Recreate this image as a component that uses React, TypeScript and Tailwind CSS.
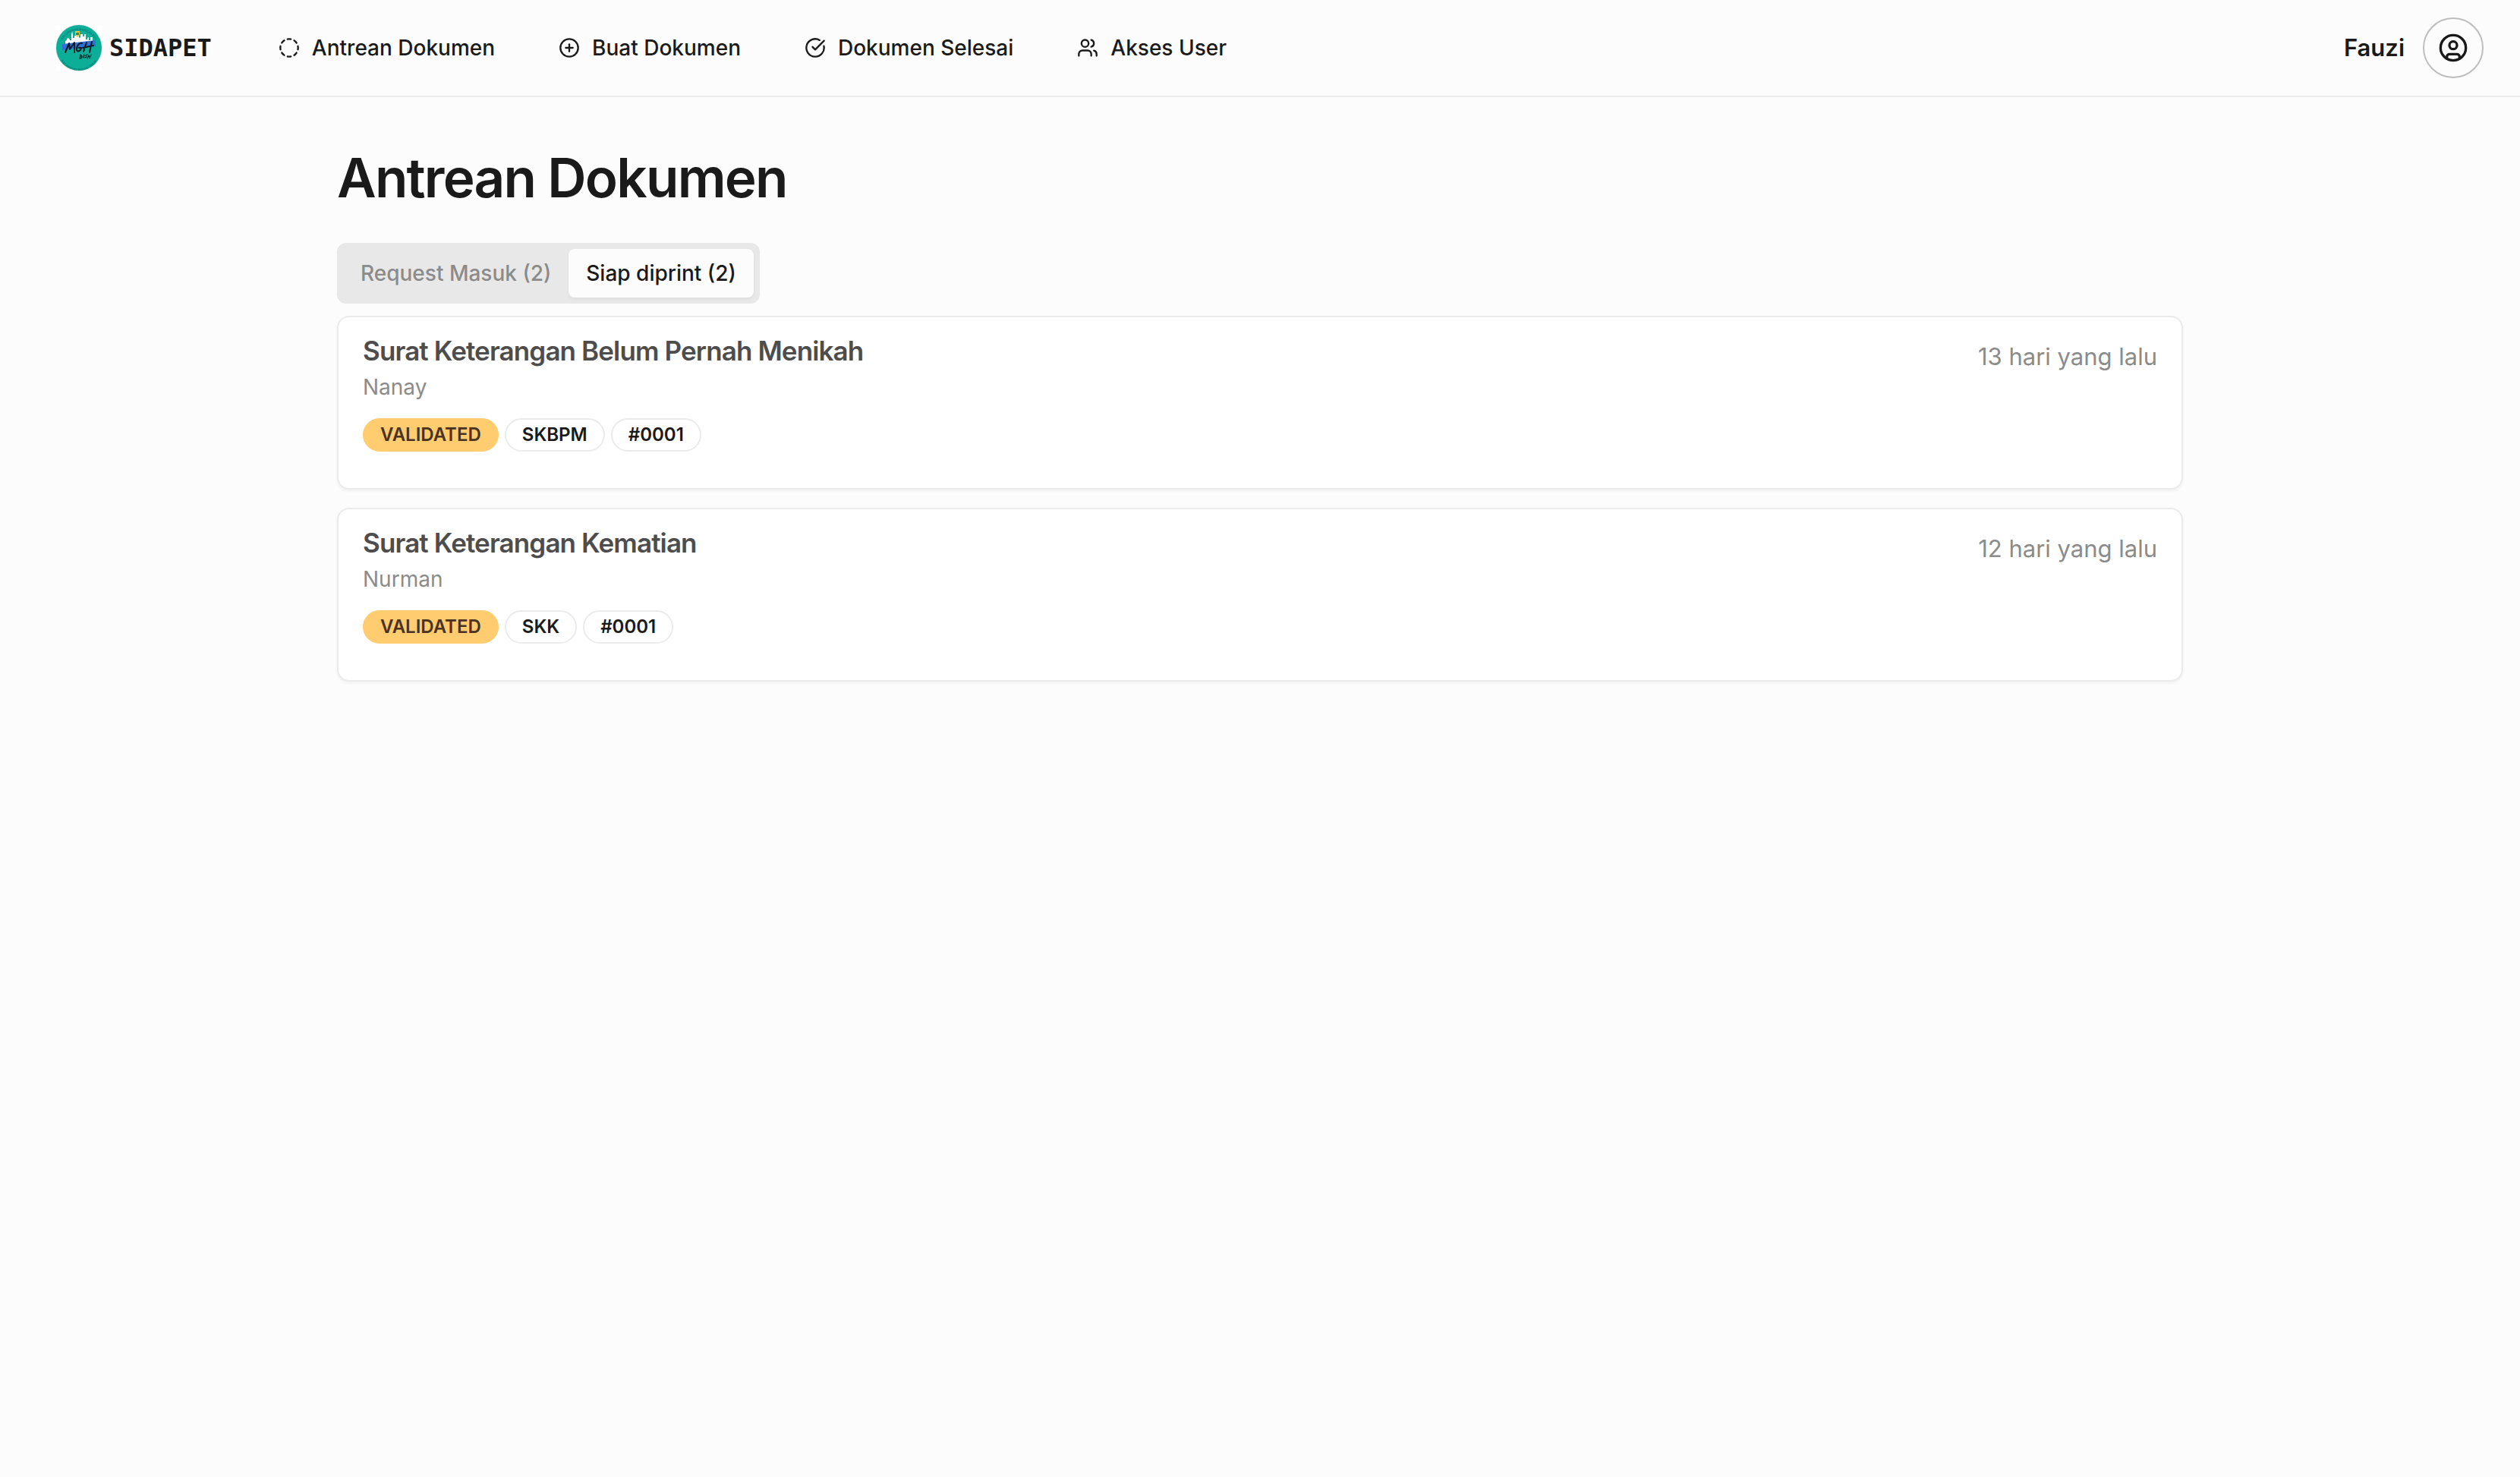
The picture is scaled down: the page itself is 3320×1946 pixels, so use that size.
import React, { useState } from "react";
import { CircleCheckBig, CircleDashed, CirclePlus, CircleUser, Users } from "lucide-react";

const NAV = [
  { label: "Antrean Dokumen", Icon: CircleDashed },
  { label: "Buat Dokumen", Icon: CirclePlus },
  { label: "Dokumen Selesai", Icon: CircleCheckBig },
  { label: "Akses User", Icon: Users },
];

const DOCUMENTS = [
  { title: "Surat Keterangan Belum Pernah Menikah", name: "Nanay", code: "SKBPM", number: "#0001", age: "13 hari yang lalu" },
  { title: "Surat Keterangan Kematian", name: "Nurman", code: "SKK", number: "#0001", age: "12 hari yang lalu" },
];

const TABS = ["Request Masuk (2)", "Siap diprint (2)"];

function Logo() {
  return (
    <svg viewBox="0 0 64 64" className="size-16 shrink-0" role="img" aria-label="MGH Bisa">
      <defs>
        <path id="ring-top" d="M7 34a25 25 0 1 1 50 0" />
        <path id="ring-bottom" d="M4 34a28 28 0 0 0 56 0" />
      </defs>
      <rect x="2" y="2" width="60" height="60" fill="#fff" />
      <circle cx="32" cy="32" r="31" fill="#e9eeed" />
      <circle cx="32" cy="32" r="30" fill="#0cae98" />
      <g fill="#0b7f76" fontFamily="Liberation Sans" fontSize="4" fontWeight="700">
        <text><textPath href="#ring-top" startOffset="50%" textAnchor="middle">KELURAHAN MARGAHAYU</textPath></text>
        <text><textPath href="#ring-bottom" startOffset="50%" textAnchor="middle">KECAMATAN BEKASI TIMUR</textPath></text>
      </g>
      <path fill="#fff" d="M14 27v-4l2-1v-2l2-1 2 2v1h2v-7l1-5 1 5v4h2v-3h6v3l2-1v-4h3v3h2v-3h2v7h2v-2l2-1v4h2v-4h3v10L30 28z" />
      <path fill="#2f6fd6" d="M10 27l44-5v8L10 35z" />
      <path fill="#e7c23c" d="M27 10h6v5l-3 3-3-3z" />
      <path fill="#2f8a4b" d="M28 12h4v3h-4z" />
      <g fill="none" stroke="#111a22" strokeLinecap="round" strokeLinejoin="round">
        <path strokeWidth="2" d="M14 38l5-12 1 8 6-9 0 13M36 26c-4-1-7 4-7 8 0 4 5 3 6-2h-3M42 25l-4 12M49 24l-3 14M37 32l14-3" />
        <path strokeWidth="1.200" d="M34 41l-1 5h2l1-2h-2l2-1-2-2M39 41l-1 4M43 41l-2 1 1 2-2 1M43 46l2-4 1 4M48 41l-1 3" />
      </g>
    </svg>
  );
}

export default function App() {
  const [tab, setTab] = useState(1);
  return (
    <div className="min-h-screen bg-[#fcfcfc] font-[Inter,sans-serif] text-[#1a1a1a]">
      <header className="flex h-32 items-center justify-between border-b-2 border-[#ebebeb] pr-12 pl-18">
        <div className="flex items-center">
          <a href="#" className="flex items-center gap-2">
            <Logo />
            <span className="font-['DejaVu_Sans_Mono',monospace] text-[32px] leading-10 font-bold">SIDAPET</span>
          </a>
          <nav className="ml-22 flex items-center gap-21">
            {NAV.map(({ label, Icon }) => (
              <a key={label} href="#" className="flex items-center gap-4 text-[28px] leading-10 font-medium">
                <Icon className="size-7" />
                {label}
              </a>
            ))}
          </nav>
        </div>
        <div className="flex items-center gap-6">
          <span className="text-[31px] leading-10 font-semibold">Fauzi</span>
          <button aria-label="Akun" className="flex size-20 items-center justify-center rounded-full border-2 border-[#bdbdbd]">
            <CircleUser className="size-10" />
          </button>
        </div>
      </header>

      <main className="mx-auto max-w-[2560px] px-16 pt-16">
        <h1 className="text-[71px] leading-[84px] font-semibold tracking-tight">Antrean Dokumen</h1>
        <div role="tablist" className="mt-11 flex h-20 w-fit items-stretch rounded-xl bg-[#e8e8e8] p-2">
          {TABS.map((label, i) => (
            <button
              key={label}
              role="tab"
              aria-selected={tab === i}
              onClick={() => setTab(i)}
              className={
                tab === i
                  ? "rounded-lg bg-[#fcfcfc] px-[23px] text-[28px] leading-10 font-medium shadow-[0_2px_4px_rgba(0,0,0,0.05)]"
                  : "rounded-lg px-[23px] text-[28px] leading-10 font-medium text-[#8b8b8b]"
              }
            >
              {label}
            </button>
          ))}
        </div>
        <ul className="mt-4 flex flex-col gap-6">
          {DOCUMENTS.map((doc) => (
            <li
              key={doc.title}
              className="flex justify-between rounded-2xl border-2 border-[#ebebeb] bg-white px-8 pt-6 pb-12 shadow-[0_2px_4px_rgba(0,0,0,0.05)]"
            >
              <div>
                <h2 className="text-[35px] leading-10 font-semibold tracking-tight text-[#4d4d4d]">{doc.title}</h2>
                <p className="mt-2 text-[28px] leading-10 text-[#8b8b8b]">{doc.name}</p>
                <div className="mt-[21px] flex gap-2 text-2xl leading-10 font-semibold">
                  <span className="rounded-full border-2 border-[#ffcc70] bg-[#ffcc70] px-[21px] text-[#4a3320]">VALIDATED</span>
                  <span className="rounded-full border-2 border-[#ebebeb] px-[21px]">{doc.code}</span>
                  <span className="rounded-full border-2 border-[#ebebeb] px-[21px]">{doc.number}</span>
                </div>
              </div>
              <p className="mt-1 text-[31px] leading-12 text-[#8b8b8b]">{doc.age}</p>
            </li>
          ))}
        </ul>
      </main>
    </div>
  );
}
